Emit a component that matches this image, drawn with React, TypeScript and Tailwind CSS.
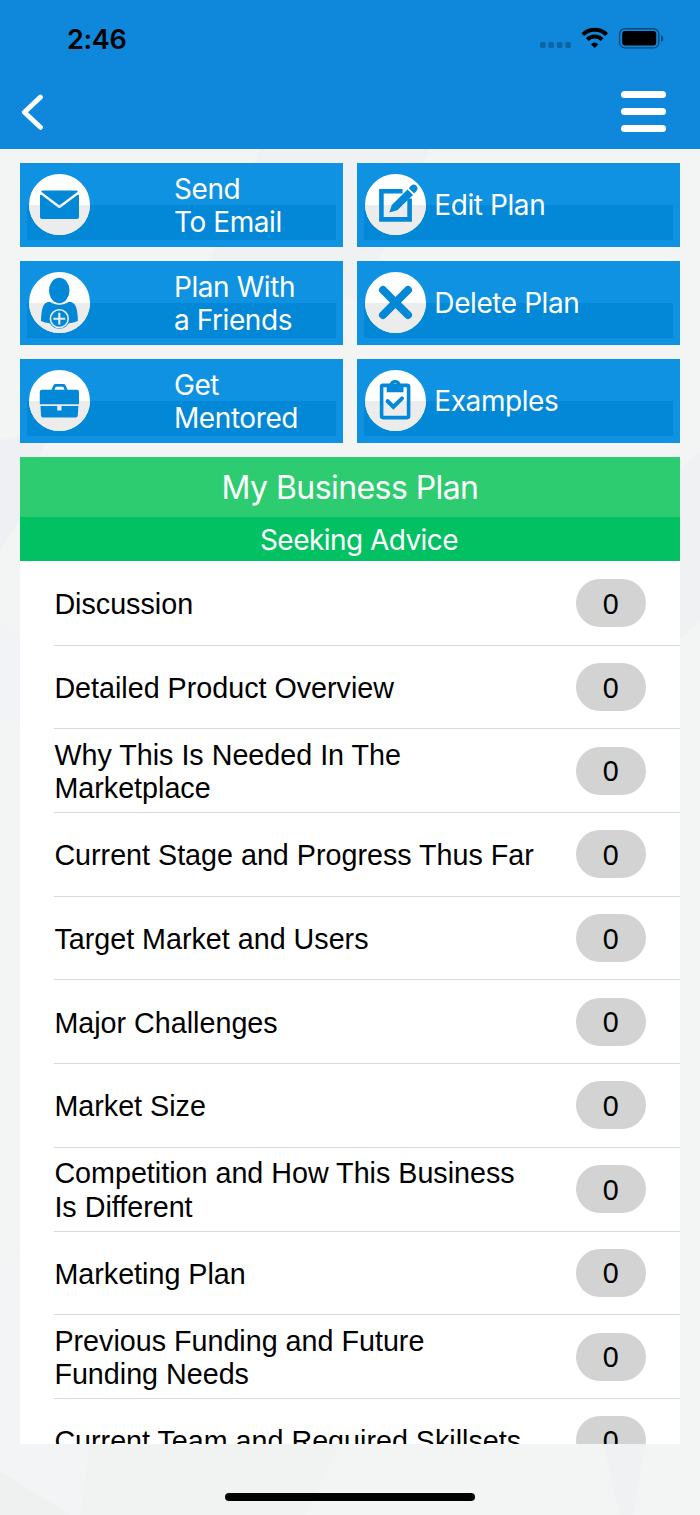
import type { ReactNode } from 'react';

interface PlanAction {
  id: string;
  lines: string[];
  icon: ReactNode;
  indented?: boolean;
}

const BLUE = '#0388d8';

const ACTIONS: PlanAction[] = [
  {
    id: 'email',
    lines: ['Send', 'To Email'],
    indented: true,
    icon: (
      <g fill={BLUE}>
        <path d="M13.5 16.5H47.5L49 17.4L32 30.3Q30.4 31.6 28.8 30.3L12 17.4Z" />
        <path d="M11 22Q11 20 12.7 21L28.3 33Q30.4 34.8 32.5 33L48.2 21Q50 20 50 22V43Q50 45 48 45H13Q11 45 11 43Z" />
      </g>
    ),
  },
  {
    id: 'edit',
    lines: ['Edit Plan'],
    icon: (
      <>
        <path d="M37.6 17.3H16.4V45.4H44.6V24.5" fill="none" stroke={BLUE} strokeWidth="4.6" />
        <path d="M42.6 15.6L48 21L32.3 36.2L24.3 38.6L26.8 30.9Z" fill={BLUE} />
        <path d="M43.8 14.2L46 11.8Q48.9 9.2 51.3 11.8Q53.8 14.4 51.3 17.2L49.2 19.6Z" fill={BLUE} />
      </>
    ),
  },
  {
    id: 'friends',
    lines: ['Plan With', 'a Friends'],
    indented: true,
    icon: (
      <>
        <path
          d="M20.5 29.8Q30.3 36.2 40.2 29.8Q45.8 30.5 47.2 35.5Q48.7 40 48.9 49Q45 50.8 40 51.2H20.5Q16 50.8 12 49Q12.2 40 13.7 35.5Q15.2 30.5 20.5 29.8Z"
          fill={BLUE}
        />
        <ellipse cx="30.3" cy="18.5" rx="10.2" ry="12.7" fill={BLUE} />
        <circle cx="30.3" cy="46.7" r="10.4" fill={BLUE} />
        <circle cx="30.3" cy="46.7" r="8.9" fill={BLUE} stroke="#ececec" strokeWidth="1.6" />
        <path d="M30.3 40.8V52.6M24.4 46.7H36.2" stroke="#ececec" strokeWidth="2.1" />
      </>
    ),
  },
  {
    id: 'delete',
    lines: ['Delete Plan'],
    icon: (
      <path d="M18 18L43 43M43 18L18 43" stroke={BLUE} strokeWidth="8" strokeLinecap="round" />
    ),
  },
  {
    id: 'mentored',
    lines: ['Get', 'Mentored'],
    indented: true,
    icon: (
      <g fill={BLUE}>
        <path
          fillRule="evenodd"
          d="M22.5 19.8L24.5 15.3Q25 13.9 26.5 13.9H34.5Q36 13.9 36.5 15.3L38.5 19.8H48Q50 19.8 50 22V34.2H10.8V22Q10.8 19.8 12.8 19.8ZM25.5 19.8H35.5L34.7 17.4Q34.4 16.7 33.6 16.7H27.4Q26.6 16.7 26.3 17.4Z"
        />
        <path d="M11.5 36H28.2V40.6H32.5V36H49.4L48.8 45.5Q48.6 47.5 46.8 47.5H14Q12.2 47.5 12 45.5Z" />
      </g>
    ),
  },
  {
    id: 'examples',
    lines: ['Examples'],
    icon: (
      <>
        <rect x="16.6" y="15.4" width="27" height="32.2" rx="1.5" fill="none" stroke={BLUE} strokeWidth="3.6" />
        <path
          fillRule="evenodd"
          d="M21.7 22.2V14.8H24.4Q25.4 10 30.1 10Q34.8 10 35.8 14.8H38.5V22.2ZM30.1 13A2 2 0 1 0 30.1 17A2 2 0 1 0 30.1 13Z"
          fill={BLUE}
        />
        <path d="M22.6 31.2L28.4 36.9L37 28.3" fill="none" stroke={BLUE} strokeWidth="4" strokeLinecap="round" />
      </>
    ),
  },
];

const SECTIONS = [
  { title: 'Discussion', count: 0 },
  { title: 'Detailed Product Overview', count: 0 },
  { title: 'Why This Is Needed In The\nMarketplace', count: 0 },
  { title: 'Current Stage and Progress Thus Far', count: 0 },
  { title: 'Target Market and Users', count: 0 },
  { title: 'Major Challenges', count: 0 },
  { title: 'Market Size', count: 0 },
  { title: 'Competition and How This Business\nIs Different', count: 0 },
  { title: 'Marketing Plan', count: 0 },
  { title: 'Previous Funding and Future\nFunding Needs', count: 0 },
  { title: 'Current Team and Required Skillsets', count: 0 },
];

function StatusBar() {
  return (
    <div className="flex h-[76px] items-center justify-between pl-[67px] pr-[36px]">
      <span className="pt-[2px] text-[27px] font-semibold leading-none tracking-[-0.3px] text-black">2:46</span>
      <svg width="124" height="24" viewBox="0 0 124 24" className="shrink-0">
        <g fill="#000" fillOpacity="0.25">
          <rect x="0" y="16" width="5.6" height="6" rx="1.5" />
          <rect x="8.4" y="16" width="5.6" height="6" rx="1.5" />
          <rect x="16.9" y="16" width="5.6" height="6" rx="1.5" />
          <rect x="25.3" y="16" width="5.6" height="6" rx="1.5" />
        </g>
        <g fill="none" stroke="#000" strokeWidth="3.9">
          <path d="M42.8 8.6A17 17 0 0 1 66.6 8.6" />
          <path d="M47.3 13.6A10.5 10.5 0 0 1 62.1 13.6" />
        </g>
        <path d="M54.7 22L51 18.2Q54.7 14.8 58.4 18.2Z" />
        <rect x="79.6" y="2.7" width="39.2" height="19.2" rx="5.2" fill="none" stroke="#000" strokeOpacity="0.45" strokeWidth="1.4" />
        <rect x="82.2" y="5.1" width="34" height="14.4" rx="3" />
        <path d="M121 9Q123.3 10.2 123.3 12.4T121 16Z" fillOpacity="0.5" />
      </svg>
    </div>
  );
}

function NavBar() {
  return (
    <div className="flex h-[71px] items-center justify-between pl-[21px] pr-[34px]">
      <button aria-label="Back">
        <svg width="24" height="38" viewBox="0 0 24 38" fill="none">
          <path d="M19.4 4.1L3.4 19.3L19.4 34.3" stroke="#fff" strokeWidth="4.9" strokeLinecap="round" strokeLinejoin="round" />
        </svg>
      </button>
      <button aria-label="Menu" className="flex flex-col gap-[10px]">
        <span className="h-[7px] w-[45px] rounded-full bg-white" />
        <span className="h-[7px] w-[45px] rounded-full bg-white" />
        <span className="h-[7px] w-[45px] rounded-full bg-white" />
      </button>
    </div>
  );
}

function ActionButton({ action }: { action: PlanAction }) {
  return (
    <button className="relative flex h-[84.5px] items-center bg-[#0e92e1] pl-[8.6px] text-left text-white">
      <span className="absolute bottom-[7px] left-[7px] right-[7px] h-[35px] bg-[#0388d8]" />
      <svg width="61" height="61" viewBox="0 0 61 61" fill="none" className="relative shrink-0">
        <circle cx="30.5" cy="30.5" r="30.5" fill="#fff" />
        <path d="M0 31A30.5 30 0 0 0 61 31Z" fill="#ececec" />
        {action.icon}
      </svg>
      <span
        className={`relative pt-[3px] text-[28px] leading-[33.7px] tracking-[-0.42px] ${
          action.indented ? 'ml-[84px]' : 'ml-[8px]'
        }`}
      >
        {action.lines.map((line) => (
          <span key={line} className="block whitespace-nowrap">
            {line}
          </span>
        ))}
      </span>
    </button>
  );
}

export default function App() {
  return (
    <div className="relative flex h-[1515px] w-[700px] flex-col overflow-hidden bg-[#f3f4f4] font-['Inter',sans-serif]">
      {/* faint polygon wallpaper */}
      <svg className="absolute inset-0" width="700" height="1515" viewBox="0 0 700 1515">
        <path d="M260 149H430L360 300L210 260Z" fill="#f0f1f2" />
        <path d="M0 440L48 430L20 520L0 550Z" fill="#eef0f3" />
        <path d="M0 620L20 640V725L0 715Z" fill="#f1f3f6" />
        <path d="M700 450L680 470V640L700 620Z" fill="#f0f1f3" />
        <path d="M0 1280L20 1250V1443H90L80 1515H70L0 1470Z" fill="#f2f4f6" />
        <path d="M0 1471L70 1515H0Z" fill="#eff0f0" />
        <path d="M90 1443H340L305 1515H80Z" fill="#f1f3f3" />
        <path d="M603 1443H645L633 1515H620Z" fill="#f0f1f3" />
      </svg>

      <header className="relative h-[149px] shrink-0 bg-[#0f88dc]">
        <StatusBar />
        <NavBar />
      </header>

      <main className="relative flex h-[1294.5px] shrink-0 flex-col overflow-hidden px-[20.4px] pt-[13.5px]">
        <div className="grid shrink-0 grid-cols-2 gap-[13.5px]">
          {ACTIONS.map((action) => (
            <ActionButton key={action.id} action={action} />
          ))}
        </div>

        <div className="mt-[13.5px] flex h-[60.5px] shrink-0 items-center justify-center bg-[#2ecc71] pt-[2px] text-[32px] tracking-[-0.57px] text-white">
          My Business Plan
        </div>
        <div className="flex h-[44px] shrink-0 items-center justify-center bg-[#02c163] pl-[18px] pt-[2px] text-[28px] tracking-[-0.55px] text-white">
          Seeking Advice
        </div>

        <ul className="shrink-0 bg-white pl-[34px] pt-px font-['Liberation_Sans',sans-serif] text-black">
          {SECTIONS.map((section) => (
            <li
              key={section.title}
              className="flex h-[83.7px] items-center justify-between border-b border-[#dadada] pr-[34px]"
            >
              <span className="whitespace-pre pt-[3px] text-[28.7px] leading-[33.3px]">{section.title}</span>
              <span className="flex h-[48px] w-[70px] items-center justify-center rounded-full bg-[#d3d3d3] pt-[2px] text-[28.7px]">
                {section.count}
              </span>
            </li>
          ))}
        </ul>
      </main>

      <div className="relative mx-auto mt-[49px] h-[8.5px] w-[250px] shrink-0 rounded-full bg-black" />
    </div>
  );
}
